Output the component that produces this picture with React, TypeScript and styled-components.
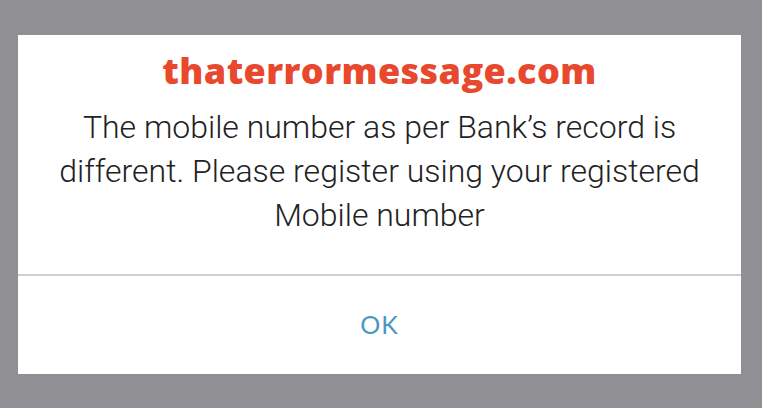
import React from 'react';
import styled, {createGlobalStyle} from "styled-components";

const GlobalStyle = createGlobalStyle`
    html, body {
        margin: 0;
        padding: 0;
        background: #8f8f94;
    }
`

export default function App() {
    return (
        <Screen>
            <GlobalStyle/>
            <Dialog>
                <Body>
                    <Brand>thaterrormessage.com</Brand>
                    <Message>
                        The mobile number as per Bank’s record is<br/>
                        different. Please register using your registered<br/>
                        Mobile number
                    </Message>
                </Body>
                <Actions>
                    <OkButton>OK</OkButton>
                </Actions>
            </Dialog>
        </Screen>
    );
}

const Screen = styled.div`
    width: 762px;
    height: 408px;
    background: #8f8f94;
    padding: 35px 21px 0 18px;
    box-sizing: border-box;
`
const Dialog = styled.div`
    width: 723px;
    height: 339px;
    background: #fff;
    display: flex;
    flex-direction: column;
`
const Body = styled.div`
    height: 241px;
    border-bottom: 2px solid #cfcfcf;
    display: flex;
    flex-direction: column;
    align-items: center;
    padding-top: 14px;
    box-sizing: border-box;
`
const Brand = styled.div`
    font-family: 'Open Sans', sans-serif;
    font-weight: 800;
    font-size: 36px;
    line-height: 44px;
    letter-spacing: 0.4px;
    color: #e8492e;
`
const Message = styled.div`
    margin-top: 12px;
    font-family: 'Roboto', sans-serif;
    font-weight: 300;
    font-size: 32px;
    line-height: 44px;
    color: #222;
    text-align: center;
`
const Actions = styled.div`
    flex: 1;
    display: flex;
    align-items: center;
    justify-content: center;
`
const OkButton = styled.div`
    font-family: 'Lato', sans-serif;
    font-size: 25px;
    color: #4a97c2;
    letter-spacing: 1px;
    padding-bottom: 2px;
`
